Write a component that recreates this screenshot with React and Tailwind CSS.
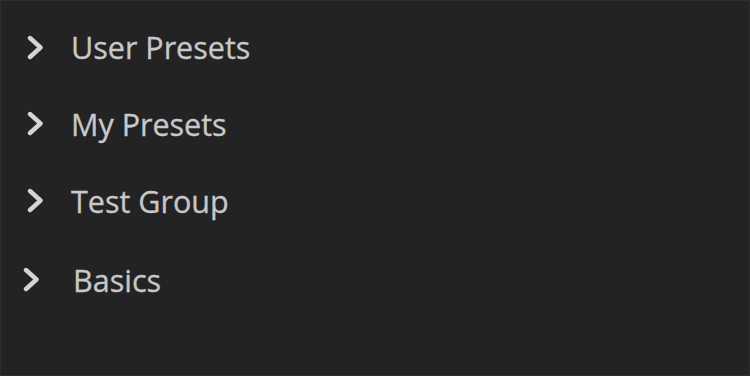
import React from "react";

function Chevron({ className = "" }) {
  return (
    <svg width="22" height="26" viewBox="0 0 22 26" className={className}>
      <path d="M5 3 L15.5 12.5 L5 22" fill="none" stroke="#d4d4d4" strokeWidth="4.4" strokeLinecap="round" strokeLinejoin="round" />
    </svg>
  );
}

const rows = [
  { label: "User Presets", h: "h-[77px]", cx: "ml-[24px]", tx: "ml-[24px]" },
  { label: "My Presets", h: "h-[76px]", cx: "ml-[24px]", tx: "ml-[24px]" },
  { label: "Test Group", h: "h-[78px]", cx: "ml-[24px]", tx: "ml-[24px]" },
  { label: "Basics", h: "h-[80px]", cx: "ml-[20px]", tx: "ml-[30px]" },
];

export default function App() {
  return (
    <div className="w-[750px] h-[376px] bg-[#232323] border border-[#2e2e2e] overflow-hidden">
      <div className="flex flex-col pt-[8px]">
        {rows.map((r) => (
          <div key={r.label} className={`flex items-center ${r.h}`}>
            <Chevron className={r.cx} />
            <span
              className={`${r.tx} text-[30.5px] leading-none text-[#c8c8c8] [-webkit-text-stroke:0.3px_#c8c8c8]`}
              style={{ fontFamily: '"Open Sans", sans-serif' }}
            >
              {r.label}
            </span>
          </div>
        ))}
      </div>
    </div>
  );
}
